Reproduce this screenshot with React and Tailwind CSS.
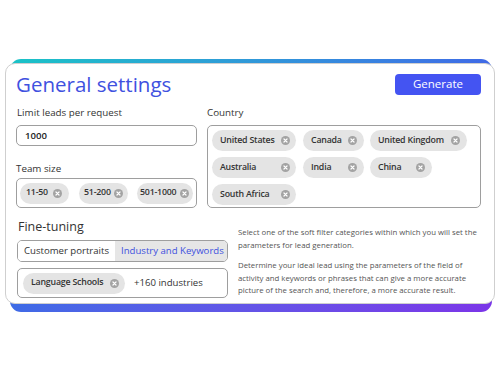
import { useState } from 'react'

function XIcon() {
  return (
    <svg width="9" height="9" viewBox="0 0 10 10" className="shrink-0">
      <circle cx="5" cy="5" r="5" fill="#a3a3a3" />
      <path d="M3.3 3.3 L6.7 6.7 M6.7 3.3 L3.3 6.7" stroke="#fff" strokeWidth="1.3" strokeLinecap="round" />
    </svg>
  )
}

function Chip({ label, className }) {
  return (
    <div className={`h-[21px] shrink-0 rounded-full bg-[#e4e4e4] flex items-center justify-between text-[8.8px] tracking-[-0.2px] font-semibold text-[#333] ${className}`}>
      <span className="whitespace-nowrap">{label}</span>
      <XIcon />
    </div>
  )
}

export default function App() {
  const [tab, setTab] = useState('industry')
  const [limit, setLimit] = useState('1000')

  return (
    <div className="w-[500px] h-[375px] bg-white pt-[59px] pl-[10px] pr-[8px]" style={{ fontFamily: '"Open Sans", "Noto Sans", sans-serif' }}>
      <div className="rounded-[11px] bg-gradient-to-br from-[#19c3c6] via-[#3f6ae6] to-[#7b34e8] pt-[4px] pb-[8px]">
        <div className="-ml-[5px] -mr-[3px] bg-white rounded-[10px] border border-[#cfcfcf] pl-[10px] pr-[13px] pt-[6px] pb-[5px]">
          <div className="flex items-center justify-between">
            <h1 className="text-[20.5px] font-medium text-[#4051df] leading-[28px]">General settings</h1>
            <button className="w-[86px] h-[21px] rounded-[4px] bg-[#4454f2] text-white text-[11.5px] font-medium">Generate</button>
          </div>

          <div className="flex gap-[10px] mt-[8px]">
            <div className="w-[181px] shrink-0">
              <div className="text-[9.8px] text-[#333] leading-[14px] pl-[1px]">Limit leads per request</div>
              <input
                aria-label="limit"
                value={limit}
                onChange={e => setLimit(e.target.value)}
                className="mt-[5px] w-full h-[21px] border border-[#9e9e9e] rounded-[5px] px-[8px] text-[9.6px] font-semibold text-[#222] outline-none"
              />
              <div className="text-[9.8px] text-[#333] leading-[14px] mt-[16px]">Team size</div>
              <div className="mt-[2px] h-[30px] border border-[#9e9e9e] rounded-[5px] pl-[3px] flex items-center">
                <Chip label="11-50" className="w-[49px] pl-[6px] pr-[7px]" />
                <Chip label="51-200" className="w-[49px] pl-[5px] pr-[5px] ml-[10px]" />
                <Chip label="501-1000" className="w-[56px] pl-[3px] pr-[4px] ml-[9px]" />
              </div>
            </div>

            <div className="flex-1">
              <div className="text-[9.8px] text-[#333] leading-[14px]">Country</div>
              <div className="mt-[5px] h-[83px] border border-[#9e9e9e] rounded-[5px] pl-[4px] pt-[4px] flex flex-col gap-[6px]">
                <div className="flex">
                  <Chip label="United States" className="w-[84px] pl-[8px] pr-[6px]" />
                  <Chip label="Canada" className="w-[61px] pl-[8px] pr-[7px] ml-[7px]" />
                  <Chip label="United Kingdom" className="w-[97px] pl-[8px] pr-[7px] ml-[6px]" />
                </div>
                <div className="flex">
                  <Chip label="Australia" className="w-[84px] pl-[8px] pr-[6px]" />
                  <Chip label="India" className="w-[61px] pl-[8px] pr-[7px] ml-[7px]" />
                  <Chip label="China" className="w-[62px] pl-[8px] pr-[7px] ml-[6px]" />
                </div>
                <div className="flex">
                  <Chip label="South Africa" className="w-[84px] pl-[8px] pr-[6px]" />
                </div>
              </div>
            </div>
          </div>

          <div className="flex gap-[10px] mt-[10px]">
            <div className="w-[212px] shrink-0 pl-[1px]">
              <div className="text-[12.5px] text-[#333] leading-[18px] pl-[1px]">Fine-tuning</div>
              <div className="mt-[4px] h-[22px] border border-[#9e9e9e] rounded-[5px] flex overflow-hidden text-[9.6px] font-medium whitespace-nowrap">
                <button
                  onClick={() => setTab('portraits')}
                  className={`w-[97px] text-left pl-[6px] ${tab === 'portraits' ? 'bg-[#e6e6e6] text-[#4051df]' : 'bg-white text-[#333]'}`}
                >Customer portraits</button>
                <button
                  onClick={() => setTab('industry')}
                  className={`flex-1 text-left pl-[6px] ${tab === 'industry' ? 'bg-[#e6e6e6] text-[#4051df]' : 'bg-white text-[#333]'}`}
                >Industry and Keywords</button>
              </div>
              <div className="mt-[6px] h-[30px] border border-[#9e9e9e] rounded-[5px] pl-[5px] flex items-center">
                <Chip label="Language Schools" className="w-[102px] pl-[8px] pr-[6px]" />
                <span className="ml-[9px] text-[9.6px] text-[#333]">+160 industries</span>
              </div>
            </div>

            <div className="flex-1 pt-[8px] text-[7.8px] leading-[12.5px] text-[#555]">
              <p>Select one of the soft filter categories within which you will set the parameters for lead generation.</p>
              <p className="mt-[8px]">Determine your ideal lead using the parameters of the field of activity and keywords or phrases that can give a more accurate picture of the search and, therefore, a more accurate result.</p>
            </div>
          </div>
        </div>
      </div>
    </div>
  )
}
